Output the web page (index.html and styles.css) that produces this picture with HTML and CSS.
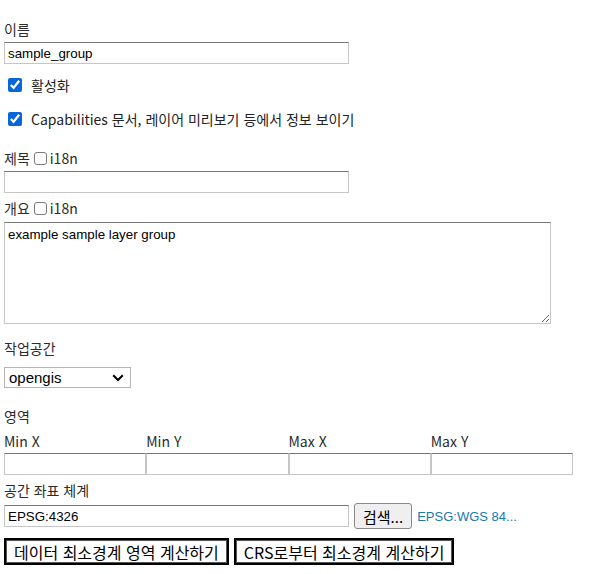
FILE: index.html
```html
<!DOCTYPE html>
<html lang="ko">
<head>
<meta charset="utf-8">
<title>레이어 그룹</title>
<link rel="stylesheet" href="styles.css">
</head>
<body>
<form class="form">
  <div class="field name-field">
    <label class="label">이름</label>
    <input class="text wide" type="text" value="sample_group">
  </div>

  <div class="check-row first">
    <input class="check" type="checkbox" checked>
    <span class="check-label">활성화</span>
  </div>
  <div class="check-row second">
    <input class="check" type="checkbox" checked>
    <span class="check-label">Capabilities 문서, 레이어 미리보기 등에서 정보 보이기</span>
  </div>

  <div class="field title-field">
    <div class="label-row"><span class="label">제목</span><input class="mini-check" type="checkbox"><span class="label">i18n</span></div>
    <input class="text wide" type="text" value="">
  </div>

  <div class="field abstract-field">
    <div class="label-row"><span class="label">개요</span><input class="mini-check" type="checkbox"><span class="label">i18n</span></div>
    <textarea class="area">example sample layer group</textarea>
  </div>

  <div class="field ws-field">
    <label class="label">작업공간</label>
    <div class="select-wrap">
      <select class="select"><option>opengis</option></select>
      <svg class="chevron" width="12" height="8" viewBox="0 0 12 8"><path d="M1.2 1.2 L6 6 L10.8 1.2" fill="none" stroke="#000" stroke-width="2"/></svg>
    </div>
  </div>

  <div class="field bounds-field">
    <label class="label">영역</label>
    <div class="bounds">
      <div class="bound"><span class="label">Min X</span><input class="text" type="text"></div>
      <div class="bound"><span class="label">Min Y</span><input class="text" type="text"></div>
      <div class="bound"><span class="label">Max X</span><input class="text" type="text"></div>
      <div class="bound"><span class="label">Max Y</span><input class="text" type="text"></div>
    </div>
  </div>

  <div class="field crs-field">
    <label class="label">공간 좌표 체계</label>
    <div class="crs-row">
      <input class="text wide" type="text" value="EPSG:4326">
      <button class="find" type="button">검색...</button>
      <a class="crs-link" href="#">EPSG:WGS 84...</a>
    </div>
  </div>

  <div class="actions">
    <button class="action" type="button">데이터 최소경계 영역 계산하기</button>
    <button class="action" type="button">CRS로부터 최소경계 계산하기</button>
  </div>
</form>
</body>
</html>
```

FILE: styles.css
```css
html, body {
  margin: 0;
  padding: 0;
  background: #fff;
}
body {
  font-family: "Noto Sans CJK KR", "Liberation Sans", sans-serif;
  font-size: 14px;
  color: #222;
}
.form {
  padding: 21px 0 0 4px;
  width: 590px;
}
.label {
  display: block;
  line-height: 16px;
  font-size: 14px;
  color: #2b2b2b;
}
.field {
  display: flex;
  flex-direction: column;
  align-items: flex-start;
}
.name-field .label {
  margin-bottom: 5px;
}
.text {
  box-sizing: border-box;
  height: 22px;
  margin: 0;
  padding: 1px 3px;
  border: 1px solid #c6c6c6;
  border-top-color: #767676;
  border-radius: 0;
  font-family: "Liberation Sans", "Noto Sans CJK KR", sans-serif;
  font-size: 13.33px;
  color: #000;
  background: #fff;
  outline: none;
}
.wide {
  width: 345px;
}
.check-row {
  display: flex;
  align-items: center;
  height: 16px;
}
.check-row.first {
  margin-top: 13px;
}
.check-row.second {
  margin-top: 18px;
}
.check {
  margin: 0 9px 0 4px;
  width: 14px;
  height: 14px;
  accent-color: #0a65d8;
}
.check-label {
  font-size: 14px;
  color: #222;
  line-height: 16px;
}
.title-field {
  margin-top: 23px;
}
.label-row {
  display: flex;
  align-items: center;
  height: 16px;
  margin-bottom: 5px;
}
.abstract-field .label-row {
  margin-bottom: 6px;
}
.label-row .label {
  display: inline;
}
.mini-check {
  box-sizing: border-box;
  appearance: none;
  -webkit-appearance: none;
  margin: 0 3px 0 4px;
  width: 13px;
  height: 13px;
  border: 1px solid #7a7a7a;
  border-radius: 3px;
  background: #fff;
}
.abstract-field {
  margin-top: 7px;
}
.area {
  box-sizing: border-box;
  width: 547px;
  height: 102px;
  margin: 0;
  padding: 4px 3px;
  border: 1px solid #c6c6c6;
  border-top-color: #767676;
  border-radius: 0;
  font-family: "Liberation Sans", "Noto Sans CJK KR", sans-serif;
  font-size: 13.33px;
  color: #000;
  resize: both;
  outline: none;
}
.ws-field {
  margin-top: 16px;
}
.ws-field .label {
  margin-bottom: 11px;
}
.select-wrap {
  position: relative;
  width: 127px;
  height: 21px;
}
.select {
  box-sizing: border-box;
  width: 127px;
  height: 21px;
  margin: 0;
  padding: 0 4px;
  appearance: none;
  -webkit-appearance: none;
  border: 1px solid #b5b5b5;
  border-radius: 0;
  background: #fff;
  font-family: "Liberation Sans", "Noto Sans CJK KR", sans-serif;
  font-size: 15px;
  color: #000;
}
.chevron {
  position: absolute;
  right: 7px;
  top: 7px;
  pointer-events: none;
}
.bounds-field {
  margin-top: 20px;
}
.bounds-field > .label {
  margin-bottom: 9px;
}
.bounds {
  display: grid;
  grid-template-columns: repeat(4, 142.25px);
}
.bound {
  display: flex;
  flex-direction: column;
}
.bound .label {
  margin-bottom: 4px;
}
.bound .text {
  width: 100%;
}
.crs-field {
  margin-top: 7px;
}
.crs-field .label {
  margin-bottom: 5px;
}
.crs-row {
  display: flex;
  align-items: center;
}
.find {
  box-sizing: border-box;
  height: 26px;
  margin: 0 5px 0 5px;
  padding: 0 8px;
  border: 1px solid #8a8a8a;
  border-radius: 3px;
  background: #efefef;
  font-family: "Noto Sans CJK KR", "Liberation Sans", sans-serif;
  font-size: 15px;
  color: #000;
}
.crs-link {
  color: #1a78b0;
  text-decoration: none;
  font-family: "Liberation Sans", "Noto Sans CJK KR", sans-serif;
  font-size: 13px;
}
.actions {
  display: flex;
  gap: 5px;
  margin-top: 9px;
}
.action {
  box-sizing: border-box;
  height: 27px;
  padding: 0 8px;
  border: 2px solid #000;
  box-shadow: inset 0 0 0 1px #555;
  border-radius: 0;
  background: #fff;
  font-family: "Noto Sans CJK KR", "Liberation Sans", sans-serif;
  font-size: 16px;
  color: #000;
}
```
